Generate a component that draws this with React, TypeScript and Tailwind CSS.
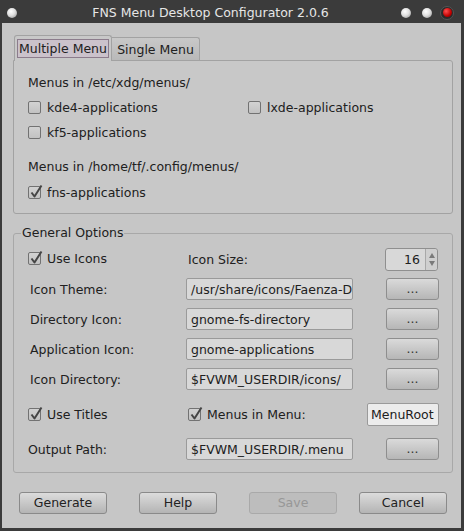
import React from "react";

const FONT = { fontFamily: '"DejaVu Sans", "Liberation Sans", sans-serif' };

function Check({ checked }: { checked?: boolean }) {
  return (
    <span className="relative inline-block w-[13px] h-[13px] rounded-[2px] border border-[#727272] bg-gradient-to-b from-[#d2d2d2] to-[#c2c2c2] shrink-0">
      {checked && (
        <svg className="absolute left-[0px] top-[-3px]" width="15" height="15" viewBox="0 0 15 15">
          <path d="M2.5 8.5 L5.5 12.5 L12.5 1.5" stroke="#454545" strokeWidth="2" fill="none" strokeLinejoin="round" />
        </svg>
      )}
    </span>
  );
}

function CheckItem({ checked, label }: { checked?: boolean; label: string }) {
  return (
    <span className="flex items-center h-[18px]">
      <Check checked={checked} />
      <span className="ml-[6px] pt-[2px]">{label}</span>
    </span>
  );
}

function Field({ value, w = "w-[167px]" }: { value: string; w?: string }) {
  return (
    <div className={`${w} h-[22px] border border-[#9a9a9a] bg-[#d8d8d8] rounded-[2px] px-[4px] pt-[2px] flex items-center overflow-hidden whitespace-nowrap`}>
      {value}
    </div>
  );
}

function DotsButton() {
  return (
    <div className="ml-[33px] w-[53px] h-[22px] border border-[#8e8e8e] rounded-[3px] bg-gradient-to-b from-[#dadada] to-[#b6b6b6] flex items-center justify-center text-[#333] pt-[1px]">
      ...
    </div>
  );
}

function Button({ label, w, disabled, ml }: { label: string; w: string; disabled?: boolean; ml: string }) {
  return (
    <div
      className={`${w} ${ml} h-[22px] rounded-[3px] flex items-center justify-center pt-[1px] ${
        disabled
          ? "border border-[#a9a9a9] bg-[#bdbdbd] text-[#979797]"
          : "border border-[#8a8a8a] bg-gradient-to-b from-[#dcdcdc] to-[#b4b4b4] text-[#222]"
      }`}
    >
      {label}
    </div>
  );
}

function Ball({ red }: { red?: boolean }) {
  if (red) {
    return (
      <span className="w-[14px] h-[14px] rounded-full bg-[#2a2a2a] border border-[#555] flex items-center justify-center">
        <span className="w-[9px] h-[9px] rounded-full bg-[radial-gradient(circle_at_35%_35%,#ff5050,#c00000_60%,#700000)]" />
      </span>
    );
  }
  return <span className="block w-[10px] h-[10px] rounded-full bg-[radial-gradient(circle_at_40%_35%,#ffffff,#e0e0e0_45%,#8a8a8a)]" />;
}

export default function App() {
  return (
    <div className="w-[464px] h-[531px] bg-[#3b3b3b] flex flex-col text-[12.5px] text-[#202020]" style={FONT}>
      {/* Title bar */}
      <div className="h-[23px] flex items-center shrink-0">
        <div className="w-[24px] flex items-center justify-center pt-[2px]">
          <Ball />
        </div>
        <div className="flex-1 text-center text-[#e6e6e6] text-[12.5px] leading-none pt-[3px]">
          FNS Menu Desktop Configurator 2.0.6
        </div>
        <div className="w-[67px] flex items-center pt-[2px]">
          <span className="ml-[4px]">
            <Ball />
          </span>
          <span className="ml-[11px]">
            <Ball />
          </span>
          <span className="ml-[8px]">
            <Ball red />
          </span>
        </div>
      </div>

      {/* Body */}
      <div className="flex-1 ml-[2px] mr-[3px] mb-[3px] bg-[#c6c6c6] flex flex-col pt-[12px]">
        {/* Tabs */}
        <div className="ml-[12px] flex items-end h-[25px]">
          <div className="relative z-10 w-[98px] h-[26px] -mb-[1px] border border-b-0 border-[#a2a2a2] rounded-t-[3px] bg-[#c8c8c8] flex items-start justify-center pt-[3px]">
            <span className="h-[19px] px-[1px] pt-[2px] border border-[#8c7c8c] bg-[#cbc2cb] flex items-center">Multiple Menu</span>
          </div>
          <div className="w-[88px] h-[23px] border border-l-0 border-b-0 border-[#a2a2a2] rounded-tr-[3px] bg-gradient-to-b from-[#c8c8c8] to-[#b9b9b9] flex items-center justify-center pt-[3px]">
            Single Menu
          </div>
        </div>

        {/* Tab pane */}
        <div className="ml-[11px] w-[440px] h-[154px] border border-[#a2a2a2] rounded-b-[3px] rounded-tr-[3px] bg-[#c8c8c8] pt-[12px] pl-[14px] flex flex-col">
          <div className="h-[18px] flex items-center pt-[2px]">Menus in /etc/xdg/menus/</div>
          <div className="mt-[7px] flex">
            <div className="w-[220px]">
              <CheckItem label="kde4-applications" />
            </div>
            <CheckItem label="lxde-applications" />
          </div>
          <div className="mt-[7px] flex">
            <CheckItem label="kf5-applications" />
          </div>
          <div className="mt-[16px] h-[18px] flex items-center pt-[2px]">Menus in /home/tf/.config/menus/</div>
          <div className="mt-[8px] flex">
            <CheckItem checked label="fns-applications" />
          </div>
        </div>

        {/* General Options */}
        <fieldset className="mt-[10px] ml-[11px] w-[440px] border border-[#a8a8a8] rounded-[3px]">
          <legend className="ml-[7px] px-[1px] h-[18px] leading-[18px]">General Options</legend>
          <div className="pl-[14px] pt-[6px] pb-[12px] flex flex-col">
            <div className="h-[22px] flex items-center">
              <div className="w-[158px] flex items-center pb-[1px]">
                <CheckItem checked label="Use Icons" />
              </div>
              <div className="w-[167px] pl-[2px] pt-[3px]">Icon Size:</div>
              <div className="ml-[32px] w-[53px] h-[23px] border border-[#8f8f8f] rounded-[3px] bg-[#d8d8d8] flex">
                <div className="flex-1 flex items-center justify-end pr-[5px] pt-[2px]">16</div>
                <div className="w-[12px] border-l border-[#a8a8a8] bg-[#cfcfcf] rounded-r-[3px] flex flex-col items-center justify-center gap-[3px]">
                  <svg width="6" height="5" viewBox="0 0 6 5">
                    <path d="M0 5 L3 0 L6 5 Z" fill="#7a7a7a" />
                  </svg>
                  <svg width="6" height="5" viewBox="0 0 6 5">
                    <path d="M0 0 L3 5 L6 0 Z" fill="#7a7a7a" />
                  </svg>
                </div>
              </div>
            </div>

            <div className="mt-[8px] h-[22px] flex items-center">
              <div className="w-[158px] pl-[2px] pt-[2px]">Icon Theme:</div>
              <Field value="/usr/share/icons/Faenza-Dark" />
              <DotsButton />
            </div>
            <div className="mt-[8px] h-[22px] flex items-center">
              <div className="w-[158px] pl-[2px] pt-[2px]">Directory Icon:</div>
              <Field value="gnome-fs-directory" />
              <DotsButton />
            </div>
            <div className="mt-[8px] h-[22px] flex items-center">
              <div className="w-[158px] pl-[2px] pt-[2px]">Application Icon:</div>
              <Field value="gnome-applications" />
              <DotsButton />
            </div>
            <div className="mt-[8px] h-[22px] flex items-center">
              <div className="w-[158px] pl-[2px] pt-[2px]">Icon Directory:</div>
              <Field value="$FVWM_USERDIR/icons/" />
              <DotsButton />
            </div>

            <div className="mt-[13px] h-[22px] flex items-center">
              <div className="w-[160px]">
                <CheckItem checked label="Use Titles" />
              </div>
              <div className="w-[179px]">
                <CheckItem checked label="Menus in Menu:" />
              </div>
              <div className="w-[72px] h-[23px] border border-[#9a9a9a] rounded-[2px] bg-[#ececec] flex items-center px-[3px] pt-[2px] overflow-hidden whitespace-nowrap">
                MenuRoot
              </div>
            </div>

            <div className="mt-[13px] h-[22px] flex items-center">
              <div className="w-[158px] pt-[2px]">Output Path:</div>
              <Field value="$FVWM_USERDIR/.menu" />
              <DotsButton />
            </div>
          </div>
        </fieldset>

        {/* Bottom buttons */}
        <div className="mt-[19px] flex">
          <Button label="Generate" w="w-[88px]" ml="ml-[17px]" />
          <Button label="Help" w="w-[78px]" ml="ml-[32px]" />
          <Button label="Save" w="w-[88px]" ml="ml-[32px]" disabled />
          <Button label="Cancel" w="w-[88px]" ml="ml-[22px]" />
        </div>
      </div>
    </div>
  );
}
